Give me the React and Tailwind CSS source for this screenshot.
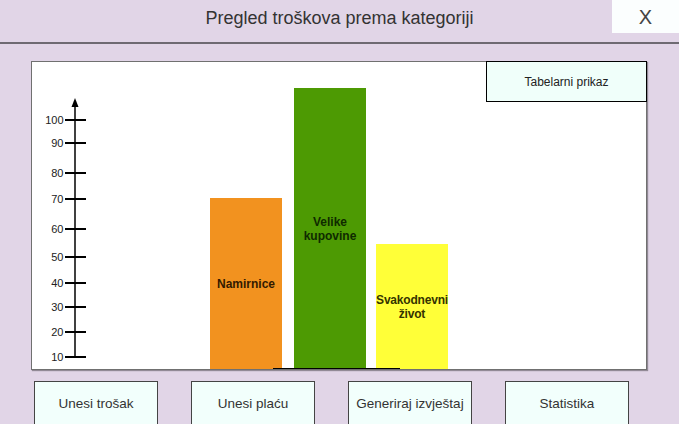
import React from "react";

const ticks = [
  [100, 58],
  [90, 81],
  [80, 111],
  [70, 137],
  [60, 167],
  [50, 195],
  [40, 221],
  [30, 245],
  [20, 270],
  [10, 295],
];

function Axis() {
  return (
    <svg width="60" height="307" viewBox="0 0 60 307" className="shrink-0 self-stretch">
      <line x1="43" y1="42" x2="43" y2="296" stroke="#000" strokeWidth="1.5" />
      <polygon points="43,36 39.5,45 46.5,45" fill="#000" />
      {ticks.map(([v, y]) => (
        <g key={v}>
          <line x1="33" y1={y} x2="54" y2={y} stroke="#000" strokeWidth="2" />
          <text
            x="31.5"
            y={y + 4}
            textAnchor="end"
            fontSize="11"
            fill="#222"
            fontFamily="'Liberation Sans', Arial, sans-serif"
          >
            {v}
          </text>
        </g>
      ))}
    </svg>
  );
}

export default function App() {
  const buttons = ["Unesi trošak", "Unesi plaću", "Generiraj izvještaj", "Statistika"];
  return (
    <div className="w-[679px] h-[424px] overflow-hidden bg-[#e1d5e7] font-['Liberation_Sans',Arial,sans-serif]">
      <header className="h-[44px] border-b-2 border-[#6e6a72] grid grid-cols-[1fr_auto_1fr]">
        <div />
        <h1 className="pt-[7px] text-[18px] leading-[22px] text-[#333]">
          Pregled troškova prema kategoriji
        </h1>
        <div className="justify-self-end w-[67px] h-[33px] bg-[#fbfefe] flex items-center justify-center text-[20px] text-[#444]">
          X
        </div>
      </header>

      <section className="mt-[17px] ml-[31px] w-[616px] h-[309px] border border-[#707070] bg-white relative flex shadow-[1px_1px_1px_rgba(0,0,0,0.35)]">
        <Axis />
        <div className="ml-[118px] flex items-end self-stretch">
          <div className="w-[72px] h-[171px] bg-[#f2921f] flex items-center justify-center text-center text-[12px] leading-[14px] font-bold text-[#331a00]">
            Namirnice
          </div>
          <div className="ml-[12px] w-[72px] h-[281px] bg-[#4d9a03] flex items-center justify-center text-center text-[12px] leading-[14px] font-bold text-[#0f2a00]">
            Velike
            <br />
            kupovine
          </div>
          <div className="ml-[10px] w-[72px] h-[125px] bg-[#ffff38] flex items-center justify-center text-center text-[12px] leading-[14px] font-bold text-[#333300] tracking-[-0.2px]">
            Svakodnevni
            <br />
            život
          </div>
        </div>
        <div className="absolute left-[241px] bottom-0 w-[127px] h-px bg-black" />
        <div className="absolute -top-px -right-px w-[161px] h-[41px] border border-black bg-[#f0fffa] flex items-center justify-center text-[12px] text-[#222]">
          Tabelarni prikaz
        </div>
      </section>

      <nav className="mt-[11px] pl-[34px] flex gap-[33px]">
        {buttons.map((b) => (
          <div
            key={b}
            className="w-[124px] h-[60px] border border-[#444] bg-[#f2fffc] pt-[13px] text-center text-[13.5px] leading-[18px] text-[#333]"
          >
            {b}
          </div>
        ))}
      </nav>
    </div>
  );
}
